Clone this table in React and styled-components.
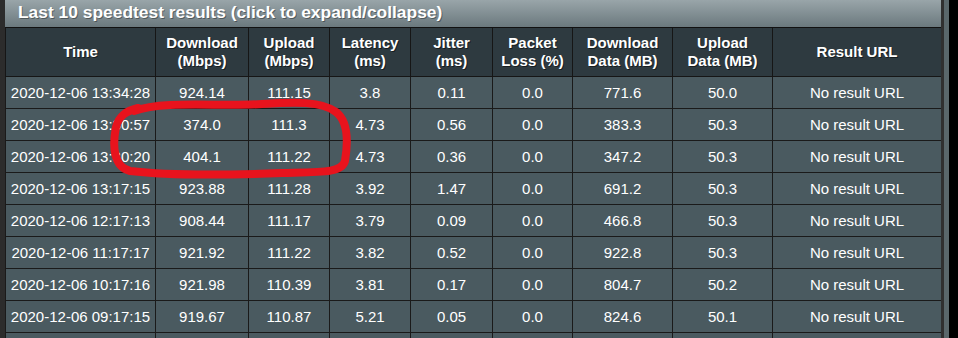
import React from 'react'
import styled, { createGlobalStyle } from 'styled-components'

const GlobalStyle = createGlobalStyle`
  html, body {
    margin: 0;
    padding: 0;
    background: #000;
  }
`

const columns = [
  { label: ['Time'], width: 150 },
  { label: ['Download', '(Mbps)'], width: 93 },
  { label: ['Upload', '(Mbps)'], width: 81 },
  { label: ['Latency', '(ms)'], width: 81 },
  { label: ['Jitter', '(ms)'], width: 82 },
  { label: ['Packet', 'Loss (%)'], width: 80 },
  { label: ['Download', 'Data (MB)'], width: 100 },
  { label: ['Upload', 'Data (MB)'], width: 100 },
  { label: ['Result URL'], width: 169 },
]

const results = [
  ['2020-12-06 13:34:28', '924.14', '111.15', '3.8', '0.11', '0.0', '771.6', '50.0'],
  ['2020-12-06 13:30:57', '374.0', '111.3', '4.73', '0.56', '0.0', '383.3', '50.3'],
  ['2020-12-06 13:30:20', '404.1', '111.22', '4.73', '0.36', '0.0', '347.2', '50.3'],
  ['2020-12-06 13:17:15', '923.88', '111.28', '3.92', '1.47', '0.0', '691.2', '50.3'],
  ['2020-12-06 12:17:13', '908.44', '111.17', '3.79', '0.09', '0.0', '466.8', '50.3'],
  ['2020-12-06 11:17:17', '921.92', '111.22', '3.82', '0.52', '0.0', '922.8', '50.3'],
  ['2020-12-06 10:17:16', '921.98', '110.39', '3.81', '0.17', '0.0', '804.7', '50.2'],
  ['2020-12-06 09:17:15', '919.67', '110.87', '5.21', '0.05', '0.0', '824.6', '50.1'],
]

export default function App() {
  return (
    <>
      <GlobalStyle />
      <Page>
        <EdgeLeft />
        <Panel>
          <TitleBar>Last 10 speedtest results (click to expand/collapse)</TitleBar>
          <Table>
            <colgroup>
              {columns.map((c, i) => (
                <col key={i} style={{ width: c.width }} />
              ))}
            </colgroup>
            <thead>
              <tr>
                {columns.map((c, i) => (
                  <Th key={i}>
                    {c.label.map((l, j) => (
                      <div key={j}>{l}</div>
                    ))}
                  </Th>
                ))}
              </tr>
            </thead>
            <tbody>
              {results.map((r, i) => (
                <Row key={i}>
                  {r.map((v, j) => (
                    <Td key={j}>{v}</Td>
                  ))}
                  <Td>No result URL</Td>
                </Row>
              ))}
              <Row>
                {columns.map((c, i) => (
                  <Td key={i} />
                ))}
              </Row>
            </tbody>
          </Table>
          <Marker viewBox="0 0 958 338" aria-hidden="true">
            <path
              d="M 134 111 C 165 100, 220 107, 262 104 C 295 102, 322 101, 336 112 C 349 122, 348 143, 345 161 C 342 173, 322 172, 282 173 C 232 175, 172 176, 130 171 C 114 167, 112 147, 116 127 C 119 116, 126 111, 138 108"
              fill="none"
              stroke="#e8131d"
              strokeWidth="8"
              strokeLinecap="round"
              strokeLinejoin="round"
            />
          </Marker>
        </Panel>
        <EdgeRight />
        <Scroll />
      </Page>
    </>
  )
}

const Page = styled.div`
  display: flex;
  height: 338px;
  width: 958px;
  overflow: hidden;
  background: #000;
  position: relative;
`

const EdgeLeft = styled.div`
  width: 5px;
  flex: none;
  background: #2c2c2c;
`

const EdgeRight = styled.div`
  width: 3px;
  flex: none;
  background: #303030;
`

const Scroll = styled.div`
  width: 5px;
  flex: none;
  background: #5a676b;
`

const Panel = styled.div`
  width: 936px;
  flex: none;
  display: flex;
  flex-direction: column;
  background: #1c1c1c;
`

const TitleBar = styled.div`
  flex: none;
  height: 28px;
  box-sizing: border-box;
  padding-left: 13px;
  padding-bottom: 2px;
  display: flex;
  align-items: center;
  background: linear-gradient(#99a5a9, #6b797e);
  color: #fff;
  font-family: 'Liberation Sans', Arial, sans-serif;
  font-weight: bold;
  font-size: 17.4px;
  text-shadow: 1px 1px 0 rgba(0, 0, 0, 0.35);
  border-bottom: 1px solid #111;
`

const Table = styled.table`
  flex: none;
  width: 936px;
  table-layout: fixed;
  border-collapse: collapse;
  font-family: 'Liberation Sans', Arial, sans-serif;
  color: #fff;
`

const Th = styled.th`
  height: 48px;
  padding: 0;
  background: #2e3a40;
  border: 1px solid #161616;
  border-top: none;
  font-size: 15px;
  font-weight: bold;
  line-height: 18px;
  text-align: center;
  text-shadow: 1px 1px 0 rgba(0, 0, 0, 0.5);
`

const Row = styled.tr`
  height: 32px;
`

const Td = styled.td`
  padding: 0;
  background: #4a5a60;
  border: 1px solid #1a1a1a;
  font-size: 15px;
  text-align: center;
  white-space: nowrap;
`

const Marker = styled.svg`
  position: absolute;
  left: 0;
  top: 0;
  width: 958px;
  height: 338px;
  pointer-events: none;
`
